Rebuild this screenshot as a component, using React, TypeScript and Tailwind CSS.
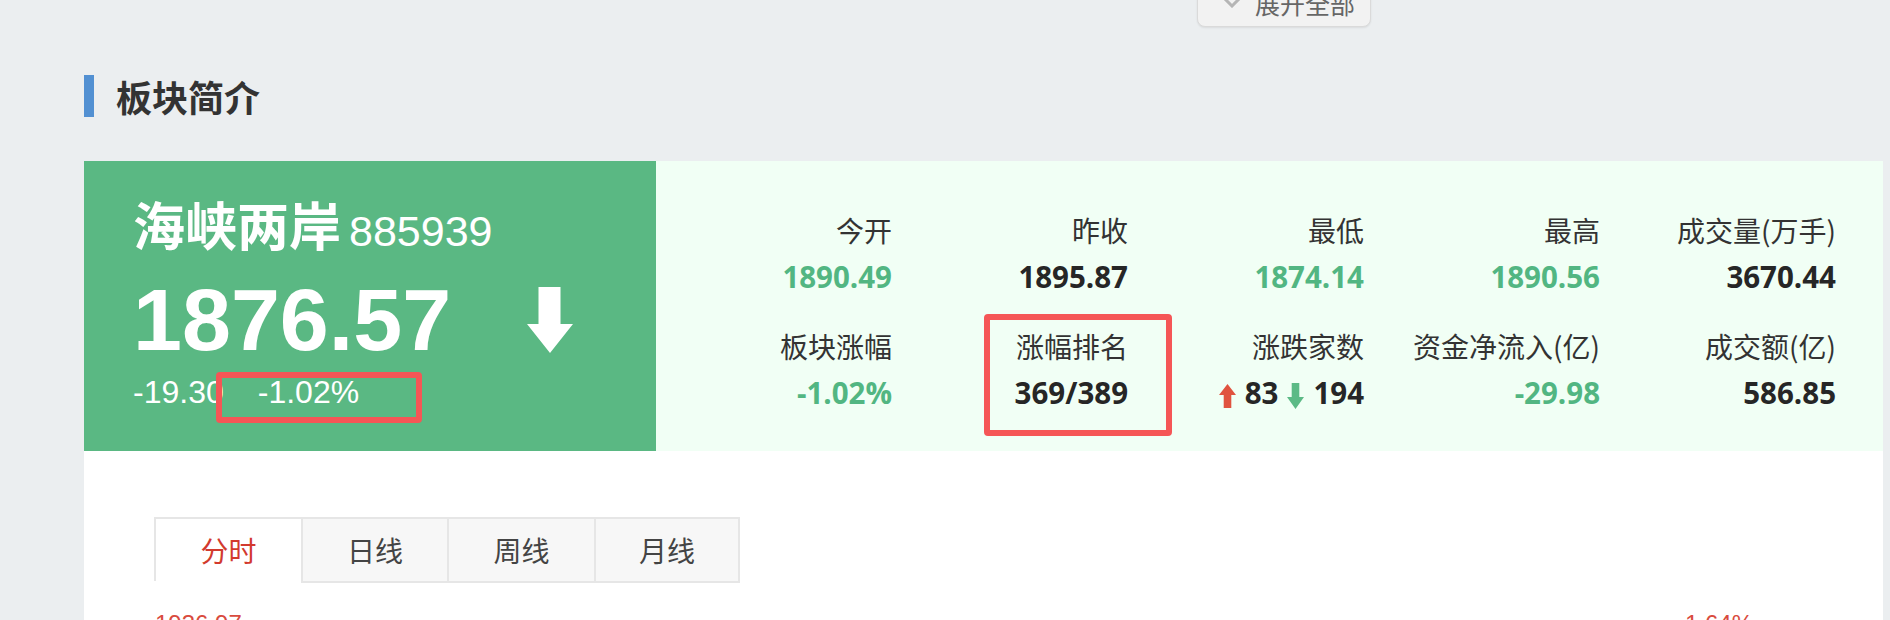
import React from "react";

const GREEN = "text-[#52b682]";
const DARK = "text-[#262626]";

const rows = [
  [
    { label: "今开", value: "1890.49", color: GREEN },
    { label: "昨收", value: "1895.87", color: DARK },
    { label: "最低", value: "1874.14", color: GREEN },
    { label: "最高", value: "1890.56", color: GREEN },
    { label: "成交量(万手)", value: "3670.44", color: DARK },
  ],
  [
    { label: "板块涨幅", value: "-1.02%", color: GREEN },
    { label: "涨幅排名", value: "369/389", color: DARK },
    { label: "涨跌家数", value: "updown", color: DARK },
    { label: "资金净流入(亿)", value: "-29.98", color: GREEN },
    { label: "成交额(亿)", value: "586.85", color: DARK },
  ],
];

const tabs = [
  { title: "分时", active: true, w: "w-[147px]" },
  { title: "日线", active: false, w: "w-[146px]" },
  { title: "周线", active: false, w: "w-[147px]" },
  { title: "月线", active: false, w: "w-[146px]" },
];

function BigDown() {
  return (
    <svg width="46" height="66" viewBox="0 0 46 66" className="shrink-0">
      <path d="M11.5 0h22v37H46L23 66 0 37h11.5z" fill="#fff" />
    </svg>
  );
}

function UpDown() {
  return (
    <span>
      <svg width="17" height="24" viewBox="0 0 17 24" className="mr-[9px] inline-block">
        <path d="M8.5 0L17 11h-4.7v13H4.7V11H0z" fill="#e0533f" />
      </svg>
      83
      <svg width="17" height="26" viewBox="0 0 17 26" className="mx-[9px] inline-block">
        <path d="M4.7 0h7.6v14H17L8.5 26 0 14h4.7z" fill="#5cba86" />
      </svg>
      194
    </span>
  );
}

export default function App() {
  return (
    <div className="h-[620px] w-full overflow-hidden bg-[#ebeef0] font-['Noto_Sans_CJK_SC',sans-serif]">
      {/* expand-all button, cut off by the viewport top */}
      <div className="flex pl-[1197px]">
        <div className="-mt-[17px] flex h-[44px] w-[174px] items-start gap-[10px] rounded-b-[8px] border border-[#dadada] bg-[#f2f2f2] pl-[21px] pt-[7px] shadow-[0_1px_2px_rgba(0,0,0,0.08)]">
          <svg width="26" height="15" viewBox="0 0 26 15" className="mt-[2px]">
            <path d="M2 2l11 11L24 2" stroke="#b5b5b5" strokeWidth="3" fill="none" />
          </svg>
          <span className="text-[25px] leading-[25px] text-[#666]">展开全部</span>
        </div>
      </div>

      {/* section header */}
      <div className="mt-[48px] flex items-center pl-[84px]">
        <div className="h-[42px] w-[10px] bg-[#5290d2]" />
        <h2 className="ml-[22px] text-[36px] font-bold leading-none text-[#333]">板块简介</h2>
      </div>

      <div className="ml-[84px] mt-[44px] w-[1799px] bg-white">
        <div className="flex h-[290px]">
          {/* green quote panel */}
          <div className="relative w-[572px] shrink-0 bg-[#5ab883] pl-[49px] pt-[41px] font-['Liberation_Sans','Noto_Sans_CJK_SC',sans-serif] text-white">
            <div className="flex items-baseline">
              <span className="text-[52px] font-bold leading-none">海峡两岸</span>
              <span className="ml-[8px] text-[43px] leading-none">885939</span>
            </div>
            <div className="mt-[22px] flex items-center">
              <span className="text-[88px] font-bold leading-none">1876.57</span>
              <div className="ml-[76px]">
                <BigDown />
              </div>
            </div>
            <div className="mt-[12px] flex text-[32px] leading-none">
              <span>-19.30</span>
              <span className="ml-[34px]">-1.02%</span>
            </div>
            <div className="absolute left-[132px] top-[211px] h-[51px] w-[206px] rounded-[4px] border-[6px] border-[#f55656]" />
          </div>

          {/* stats panel */}
          <div className="relative flex-1 bg-[#f1fff5] pr-[47px] pt-[55px]">
            <div className="grid grid-cols-5 gap-y-[41px]">
              {rows.flat().map((s) => (
                <div key={s.label} className="flex flex-col items-end">
                  <span className="text-[28px] leading-[28px] text-[#333]">{s.label}</span>
                  <span
                    className={`mt-[18px] font-['Open_Sans','Noto_Sans_CJK_SC',sans-serif] text-[29.5px] font-bold leading-[29px] ${s.color}`}
                  >
                    {s.value === "updown" ? <UpDown /> : s.value}
                  </span>
                </div>
              ))}
            </div>
            <div className="absolute left-[328px] top-[153px] h-[122px] w-[188px] rounded-[4px] border-[6px] border-[#f55656]" />
          </div>
        </div>

        {/* chart tabs */}
        <div className="flex items-start pl-[70px] pt-[66px]">
          {tabs.map((t, i) => (
            <div
              key={t.title}
              className={
                t.active
                  ? `flex h-[64px] ${t.w} items-center justify-center border-l-2 border-t-2 border-[#e6e6e6] bg-white text-[28px] text-[#d23a2e]`
                  : `flex h-[66px] ${t.w} items-center justify-center border-b-2 border-l-2 border-t-2 border-[#e6e6e6] bg-[#f7f7f7] text-[28px] text-[#444] ${i === tabs.length - 1 ? "border-r-2" : ""}`
              }
            >
              {t.title}
            </div>
          ))}
        </div>

        <div className="mt-[29px] flex justify-between pl-[71px] pr-[130px] font-['Liberation_Sans',sans-serif] text-[24px] leading-none text-[#d94b3e]">
          <span>1936.97</span>
          <span>1.64%</span>
        </div>
        <div className="h-[40px]" />
      </div>
    </div>
  );
}
